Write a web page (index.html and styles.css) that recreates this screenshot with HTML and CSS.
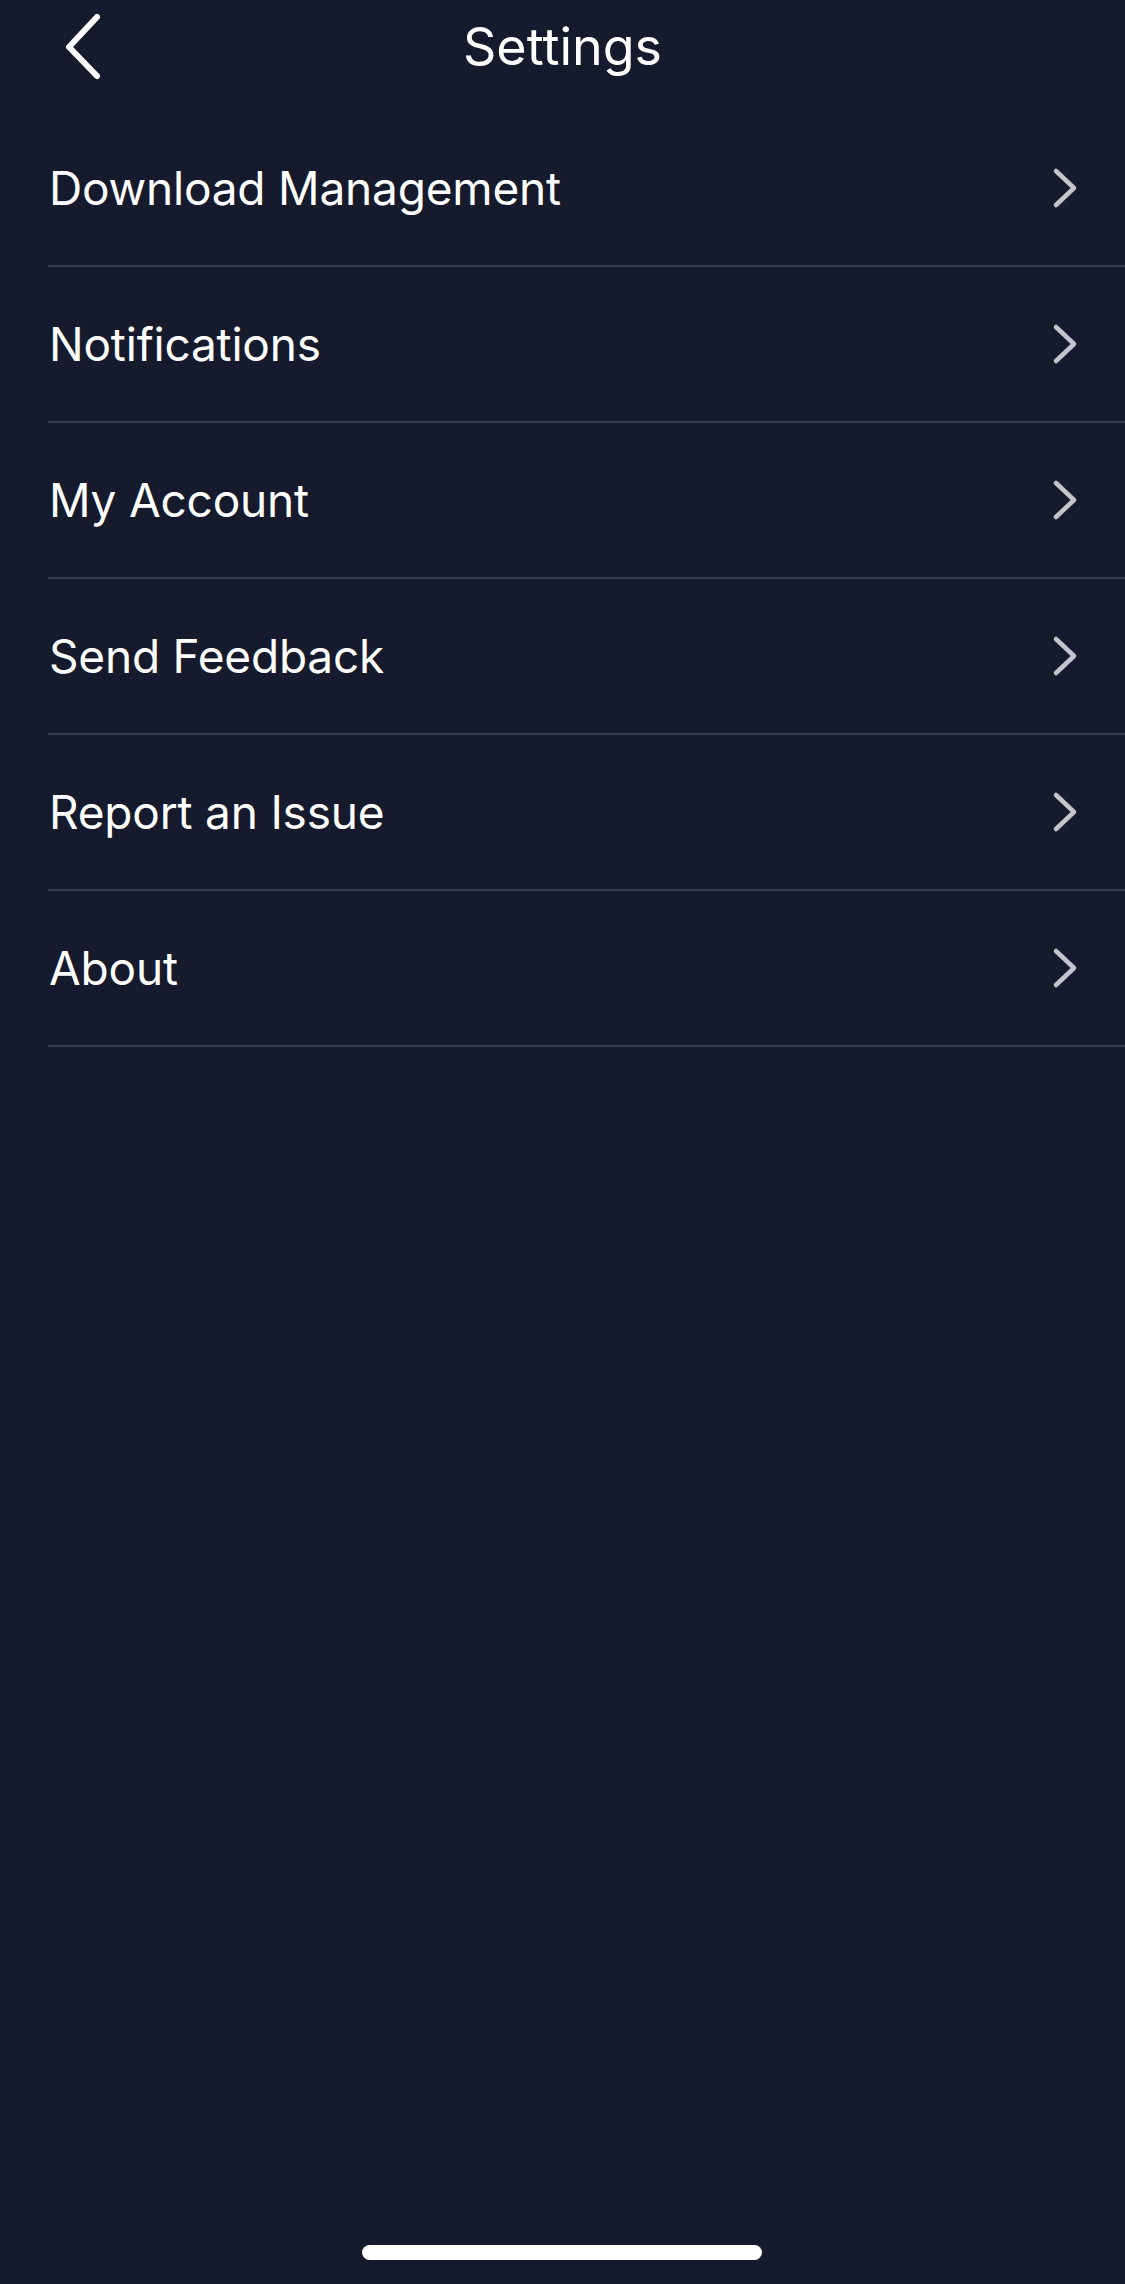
FILE: index.html
```html
<!DOCTYPE html>
<html>
<head>
  <meta name="viewport" content="width=device-width, initial-scale=1.0, user-scalable=no">
  <title>Settings</title>
  <link rel="stylesheet" href="styles.css">
</head>
<body>
  <div class="header">
    <a class="back" href="#">
      <svg width="40" height="68" viewBox="0 0 40 68">
        <polyline points="33,4 5,34 33,63" fill="none" stroke="#ffffff" stroke-width="6" stroke-linecap="round" stroke-linejoin="round"/>
      </svg>
    </a>
    <h1>Settings</h1>
  </div>

  <ul class="menu">
    <li class="menu-item"><span>Download Management</span><svg class="chev" width="26" height="42" viewBox="0 0 26 42"><polyline points="4,4 22,21 4,38" fill="none" stroke="#c3c5cb" stroke-width="4.5" stroke-linecap="round" stroke-linejoin="round"/></svg></li>
    <li class="menu-item"><span>Notifications</span><svg class="chev" width="26" height="42" viewBox="0 0 26 42"><polyline points="4,4 22,21 4,38" fill="none" stroke="#c3c5cb" stroke-width="4.5" stroke-linecap="round" stroke-linejoin="round"/></svg></li>
    <li class="menu-item"><span>My Account</span><svg class="chev" width="26" height="42" viewBox="0 0 26 42"><polyline points="4,4 22,21 4,38" fill="none" stroke="#c3c5cb" stroke-width="4.5" stroke-linecap="round" stroke-linejoin="round"/></svg></li>
    <li class="menu-item"><span>Send Feedback</span><svg class="chev" width="26" height="42" viewBox="0 0 26 42"><polyline points="4,4 22,21 4,38" fill="none" stroke="#c3c5cb" stroke-width="4.5" stroke-linecap="round" stroke-linejoin="round"/></svg></li>
    <li class="menu-item"><span>Report an Issue</span><svg class="chev" width="26" height="42" viewBox="0 0 26 42"><polyline points="4,4 22,21 4,38" fill="none" stroke="#c3c5cb" stroke-width="4.5" stroke-linecap="round" stroke-linejoin="round"/></svg></li>
    <li class="menu-item"><span>About</span><svg class="chev" width="26" height="42" viewBox="0 0 26 42"><polyline points="4,4 22,21 4,38" fill="none" stroke="#c3c5cb" stroke-width="4.5" stroke-linecap="round" stroke-linejoin="round"/></svg></li>
  </ul>

  <div class="home-bar"></div>
</body>
</html>
```

FILE: styles.css
```css
html {
  background-color: #151a2c;
}
body {
  margin: 0;
  min-height: 2284px;
  font-family: Inter, "Noto Sans", sans-serif;
  color: #ffffff;
  background-color: #151a2c;
}
.header {
  position: relative;
  height: 92px;
  display: flex;
  align-items: center;
  justify-content: center;
}
.back {
  position: absolute;
  left: 64px;
  top: 13px;
  display: block;
  line-height: 0;
}
.header h1 {
  margin: 0;
  font-size: 52px;
  font-weight: 400;
  color: #ffffff;
}
.menu {
  list-style: none;
  margin: 19px 0 0 0;
  padding: 0 0 0 48px;
}
.menu-item {
  height: 154px;
  border-bottom: 2px solid #3a3f4f;
  display: flex;
  align-items: center;
  justify-content: space-between;
  padding: 0 47px 0 1px;
  font-size: 46px;
  letter-spacing: -0.2px;
  color: #ffffff;
}
.chev {
  display: block;
}
.home-bar {
  position: fixed;
  left: 362px;
  bottom: 24px;
  width: 400px;
  height: 15px;
  border-radius: 8px;
  background-color: #ffffff;
}
```
